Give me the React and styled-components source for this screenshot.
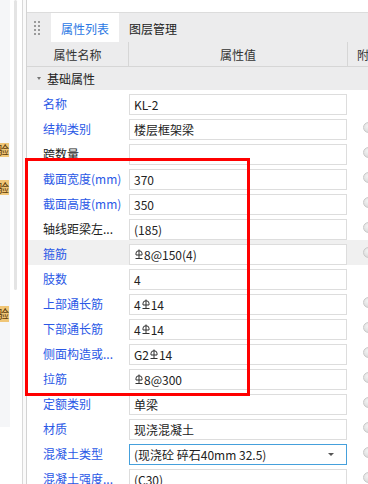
import React from "react";
import styled, { createGlobalStyle } from "styled-components";

const GlobalStyle = createGlobalStyle`
  html, body {
    margin: 0;
    padding: 0;
    overflow: hidden;
    background: #fff;
  }
  body {
    font-family: "Noto Sans CJK SC", "Noto Sans", sans-serif;
    font-size: 12px;
    color: #222;
  }
`;

const Page = styled.div`
  position: relative;
  display: flex;
  width: 368px;
  height: 484px;
  overflow: hidden;
`;

const SideStrip = styled.div`
  display: flex;
  width: 22px;
  flex-shrink: 0;
  border-right: 1px solid #d9d9d9;
`;

const BadgeCol = styled.div`
  display: flex;
  flex-direction: column;
  width: 10px;
  background: linear-gradient(#f5f6f8 0 427px, #fff 427px);
`;

const Badge = styled.div`
  display: flex;
  flex-shrink: 0;
  justify-content: flex-end;
  align-items: center;
  width: 9px;
  height: ${(p) => p.$h}px;
  margin-top: ${(p) => p.$top}px;
  overflow: hidden;
  background: #f0c677;
  color: #5b3c0a;
  font-size: 12px;
  line-height: 1;
  white-space: nowrap;
`;

const ScrollCol = styled.div`
  flex: 1;
  padding-left: 4px;
`;

const Thumb = styled.div`
  width: 3px;
  height: 290px;
  border-radius: 2px;
  background: #e4e4e4;
`;

const Spacer = styled.div`
  width: 3px;
  flex-shrink: 0;
  background: #fafafa;
  border-right: 1px solid #d3d3d3;
`;

const Panel = styled.div`
  flex: 1;
  display: flex;
  flex-direction: column;
  min-width: 0;
  & > * {
    flex-shrink: 0;
  }
`;

const TopBox = styled.div`
  height: 12px;
  background: #fff;
  border-bottom: 1px solid #dcdcdc;
`;

const TabBar = styled.div`
  display: flex;
  align-items: stretch;
  height: 29px;
  background: #ececed;
`;

const Grip = styled.div`
  display: grid;
  grid-template-columns: repeat(2, 2px);
  grid-auto-rows: 2px;
  gap: 2px;
  align-content: center;
  padding: 0 11px 0 7px;
  & span {
    background: #9a9a9a;
  }
`;

const Tab = styled.div`
  display: flex;
  align-items: center;
  padding: 1px 10px 0;
  background: ${(p) => (p.$active ? "#fff" : "transparent")};
  color: ${(p) => (p.$active ? "#2b78e4" : "#222")};
  font-size: 12px;
`;

const HeadRow = styled.div`
  display: flex;
  height: 24px;
  background: #ececed;
  border-bottom: 1px solid #d6d6d6;
`;

const HeadCell = styled.div`
  display: flex;
  align-items: center;
  justify-content: ${(p) => (p.$left ? "flex-start" : "center")};
  width: ${(p) => (p.$w ? `${p.$w}px` : "auto")};
  flex: ${(p) => (p.$w ? "none" : "1")};
  padding-left: ${(p) => (p.$left ? "9px" : "0")};
  border-right: ${(p) => (p.$w ? "1px solid #d6d6d6" : "none")};
  color: #333;
  white-space: nowrap;
  overflow: hidden;
`;

const GroupRow = styled.div`
  display: flex;
  align-items: center;
  gap: 6px;
  height: 23px;
  padding-left: 10px;
  background: #ececed;
  color: #222;
`;

const Caret = styled.span`
  width: 0;
  height: 0;
  border-left: 2.5px solid transparent;
  border-right: 2.5px solid transparent;
  border-top: 3px solid #777;
`;

const Row = styled.div`
  display: flex;
  height: 25px;
  background: ${(p) => (p.$active ? "#f0f0f0" : "#fff")};
`;

const Label = styled.div`
  width: 86px;
  flex-shrink: 0;
  padding: 1px 0 0 16px;
  line-height: 25px;
  color: ${(p) => (p.$blue ? "#2a58e6" : "#222")};
  white-space: nowrap;
  overflow: hidden;
`;

const ValueBox = styled.div`
  display: flex;
  align-items: center;
  flex-shrink: 0;
  box-sizing: border-box;
  width: 218px;
  height: 21px;
  margin-top: 4px;
  padding: 0 4px;
  background: #fff;
  border: 1px solid ${(p) => (p.$focus ? "#45a0dc" : "#dddddd")};
  color: #222;
  white-space: nowrap;
  overflow: hidden;
`;

const ValueText = styled.span`
  flex: 1;
  display: flex;
  align-items: center;
`;

const DropArrow = styled.span`
  width: 0;
  height: 0;
  margin-right: 8px;
  border-left: 3px solid transparent;
  border-right: 3px solid transparent;
  border-top: 3px solid #555;
`;

const Extra = styled.div`
  flex: 1;
  padding-left: 16px;
`;

const Radio = styled.div`
  box-sizing: border-box;
  width: 11px;
  height: 11px;
  margin-top: 7px;
  border-radius: 50%;
  border: 1px solid #c9c9c9;
  background: radial-gradient(circle at 40% 35%, #f2f2f2, #d4d4d4);
`;

const Highlight = styled.div`
  position: absolute;
  left: 25px;
  top: 158px;
  width: 225px;
  height: 238px;
  box-sizing: border-box;
  border: 3px solid #ff0000;
  pointer-events: none;
`;

const RebarIcon = () => (
  <svg width="8" height="11" viewBox="0 0 8 11" style={{ margin: "0 1px" }}>
    <g fill="none" stroke="#333" strokeWidth="1">
      <path d="M1 6 V4.2 a3 2.4 0 0 1 6 0 V6" />
      <path d="M1 6 H7" />
      <path d="M4 0.5 V9.5" />
      <path d="M0.5 9.5 H7.5" />
    </g>
  </svg>
);

const rows = [
  { label: "名称", value: "KL-2", blue: true },
  { label: "结构类别", value: "楼层框架梁", blue: true, dot: true },
  { label: "跨数量", value: "", dot: true },
  { label: "截面宽度(mm)", value: "370", blue: true, dot: true },
  { label: "截面高度(mm)", value: "350", blue: true, dot: true },
  { label: "轴线距梁左...", value: "(185)", dot: true },
  { label: "箍筋", value: "Φ8@150(4)", blue: true, dot: true, active: true },
  { label: "肢数", value: "4", blue: true },
  { label: "上部通长筋", value: "4Φ14", blue: true, dot: true },
  { label: "下部通长筋", value: "4Φ14", blue: true, dot: true },
  { label: "侧面构造或...", value: "G2Φ14", blue: true, dot: true },
  { label: "拉筋", value: "Φ8@300", blue: true, dot: true },
  { label: "定额类别", value: "单梁", blue: true, dot: true },
  { label: "材质", value: "现浇混凝土", blue: true, dot: true },
  { label: "混凝土类型", value: "(现浇砼 碎石40mm 32.5)", blue: true, dot: true, select: true },
  { label: "混凝土强度...", value: "(C30)", blue: true, dot: true },
];

const renderValue = (value) =>
  value.split("Φ").map((part, i) => (
    <React.Fragment key={i}>
      {i > 0 && <RebarIcon />}
      {part}
    </React.Fragment>
  ));

const App = () => {
  return (
    <Page>
      <GlobalStyle />
      <SideStrip>
        <BadgeCol>
          <Badge $top={143} $h={14}>验</Badge>
          <Badge $top={23} $h={15}>验</Badge>
          <Badge $top={111} $h={16}>验</Badge>
        </BadgeCol>
        <ScrollCol>
          <Thumb />
        </ScrollCol>
      </SideStrip>
      <Spacer />
      <Panel>
        <TopBox />
        <TabBar>
          <Grip>
            {Array.from({ length: 8 }).map((_, i) => (
              <span key={i} />
            ))}
          </Grip>
          <Tab $active>属性列表</Tab>
          <Tab>图层管理</Tab>
        </TabBar>
        <HeadRow>
          <HeadCell $w={101}>属性名称</HeadCell>
          <HeadCell $w={218}>属性值</HeadCell>
          <HeadCell $left>附加</HeadCell>
        </HeadRow>
        <GroupRow>
          <Caret />
          基础属性
        </GroupRow>
        {rows.map((r) => (
          <Row key={r.label} $active={r.active}>
            <Label $blue={r.blue}>{r.label}</Label>
            <ValueBox $focus={r.select}>
              <ValueText>{renderValue(r.value)}</ValueText>
              {r.select && <DropArrow />}
            </ValueBox>
            <Extra>{r.dot && <Radio />}</Extra>
          </Row>
        ))}
      </Panel>
      <Highlight />
    </Page>
  );
};

export default App;
